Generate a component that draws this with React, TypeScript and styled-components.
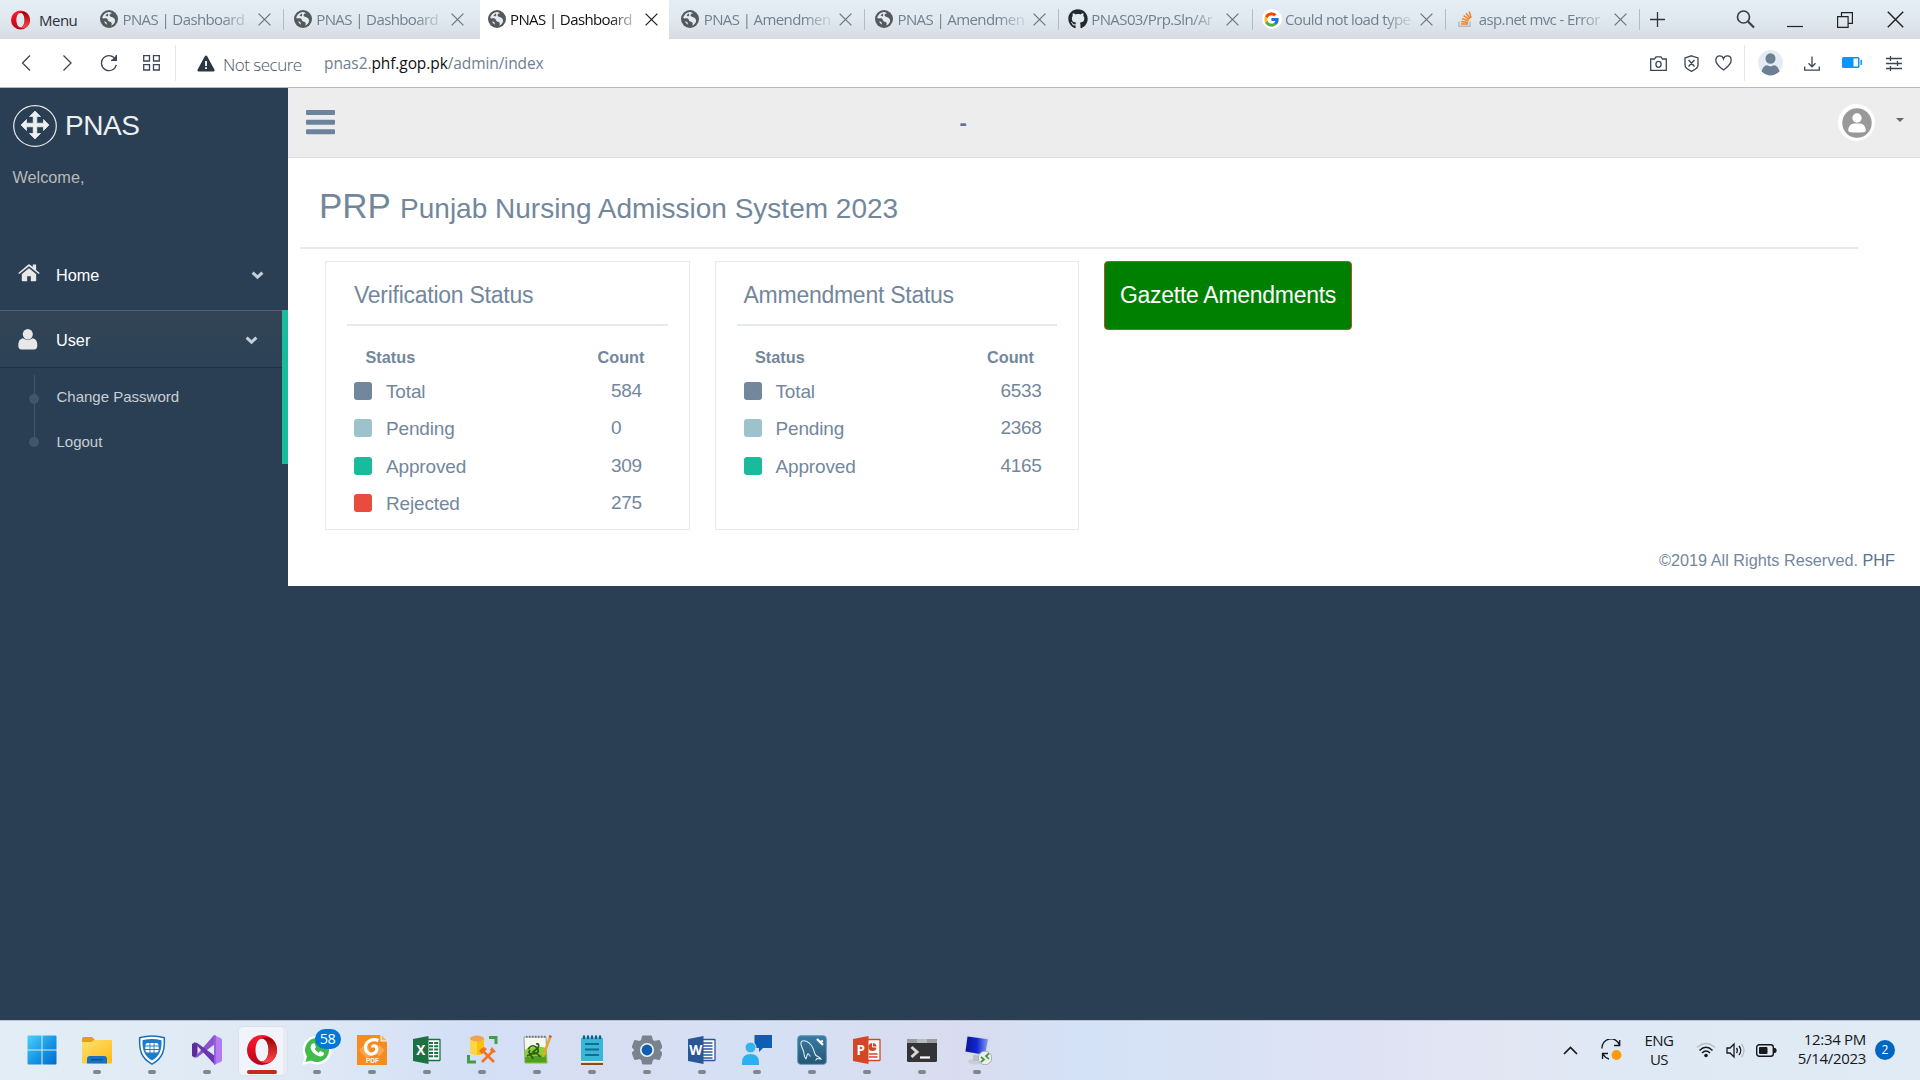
import React from 'react';
import styled, { createGlobalStyle, css } from 'styled-components';
import { FaGithub } from 'react-icons/fa';
import { FcGoogle } from 'react-icons/fc';

const Global = createGlobalStyle`
  * { box-sizing: border-box; }
  body { margin: 0; background: #2a3f54; overflow: hidden; }
  svg { display: block; flex: none; }
`;

const ui = css`font-family: "Open Sans", "Noto Sans", sans-serif; white-space: nowrap;`;

const Screen = styled.div`
  width: 1920px; height: 1080px; display: flex; flex-direction: column;
  background: #2a3f54; font-family: "Liberation Sans", Arial, sans-serif; color: #73879c;
`;

/* ---------- browser chrome ---------- */
const TabBar = styled.div`
  height: 39px; flex: none; display: flex; align-items: stretch;
  background: linear-gradient(#e4ecf4 0%, #e1e9f1 45%, #d7dce4 100%);
`;
const MenuButton = styled.div`
  ${ui} width: 90px; padding-left: 11px; display: flex; align-items: center; gap: 9px;
  font-size: 15px; color: #2b3038; letter-spacing: -0.5px; padding-top: 1px;
`;
const Tab = styled.div<{ $active?: boolean; $sep?: boolean }>`
  ${ui} width: 193.75px; padding: 0 12px 0 10px; display: flex; align-items: center; position: relative;
  font-size: 15px; color: ${p => (p.$active ? '#111' : '#71808e')};
  ${p => p.$active && css`background: #fff; margin-left: 2px; width: 189.75px; margin-right: 2px; padding: 0 10px 0 8px;`}
  ${p => p.$sep && css`&::after { content: ''; position: absolute; right: 0; top: 9px; width: 1px; height: 21px; background: #b0bcc9; }`}
`;
const Favicon = styled.div`width: 19px; height: 20px; display: flex; align-items: center; justify-content: center; margin: -1px 0 0 -0.500px;`;
const TabTitle = styled.div`
  width: 128px; margin: -2px 7px 0 4px; line-height: 24px; letter-spacing: -0.6px; font-stretch: 90%;
  mask-image: linear-gradient(90deg, #000 78%, rgba(0,0,0,.25) 96%);
`;
const WindowTools = styled.div`
  flex: 1; display: flex; align-items: center; padding: 0 16.500px 0 10px;
`;
const Spacer = styled.div<{ $w?: number }>`${p => (p.$w ? `width: ${p.$w}px; flex: none;` : 'flex: 1;')}`;

const AddressBar = styled.div`
  ${ui} height: 49px; flex: none; background: #fff; border-bottom: 1px solid #aebccb;
  display: flex; align-items: center; font-size: 16px; padding: 0 18px 0 18px;
`;
const Divider = styled.div`width: 1px; height: 36px; background: #e3e6ea;`;
const NotSecure = styled.div`font-size: 17px; color: #4c5866; font-weight: 300; letter-spacing: -0.5px; padding-top: 3px; width: 101px;`;
const Url = styled.div`font-size: 15.5px; color: #6f8090; letter-spacing: -0.09px; b { font-weight: 400; color: #111; }`;

/* ---------- site ---------- */
const Body = styled.div`flex: 1; display: flex; align-items: flex-start;`;
const Sidebar = styled.aside`width: 288px; flex: none; padding-top: 17px;`;
const Brand = styled.div`
  display: flex; align-items: center; gap: 8px; padding-left: 13px; height: 42px;
  font-size: 28px; color: #ecf0f1; line-height: 40px; letter-spacing: -0.4px;
  span { margin-top: -1px; }
`;
const Welcome = styled.div`padding: 20px 12.5px 0; font-size: 16.25px; line-height: 20px; color: #bab8b8; height: 93px;`;
const MenuItem = styled.div<{ $current?: boolean }>`
  height: 70px; display: flex; align-items: center; font-size: 16.25px; color: #fff; padding: 0 24px 0 18px;
  ${p => p.$current && css`
    height: 58px; padding-top: 2px; border-top: 1px solid #52616f; border-bottom: 1px solid #1f3040;
    background: linear-gradient(#334556, #2c4257);
  `}
`;
const MenuLabel = styled.span`flex: 1; margin-left: 16px;`;
const Current = styled.div`border-right: 6px solid #1abb9c; height: 154px;`;
const SubMenu = styled.div`padding: 7px 0 0 29px;`;
const SubItem = styled.div<{ $last?: boolean }>`
  height: 44px; display: flex; align-items: center; gap: 17.5px; position: relative; padding-bottom: ${p => (p.$last ? 0 : 1)}px;
  font-size: 15px; color: rgba(255,255,255,.75);
  &::before { content: ''; width: 10px; height: 10px; border-radius: 50%; background: #425668; margin-top: ${p => (p.$last ? 2 : 4)}px; z-index: 1; }
  &::after { content: ''; position: absolute; left: 5px; top: 0; width: 1px; height: ${p => (p.$last ? 22 : 44)}px; background: #425668; }
`;
const Main = styled.main`flex: 1; height: 498px; background: #fff; display: flex; flex-direction: column;`;
const TopNav = styled.div`
  height: 70px; flex: none; background: #ededed; border-bottom: 1px solid #d9dee4; display: flex; align-items: center;
  padding: 0 16px 0 18px; color: #5a738e; font-size: 22px; font-weight: bold;
`;
const Avatar = styled.div`width: 37px; height: 37px; border-radius: 50%; background: #fff; display: grid; place-items: center;`;
const Caret = styled.div`border: 4px solid transparent; border-top-color: #5a6b7c; border-bottom: 0; margin: -5px 0 0 21px;`;
const PageTitle = styled.h1`
  margin: 0 62px 0 12px; padding: 28px 0 0 19px; height: 91px; border-bottom: 2px solid #e6e9ed;
  font-weight: 400; font-size: 35px; line-height: 40px; flex: none;
  small { font-size: 28px; }
`;
const Cards = styled.div`display: flex; gap: 25px; padding: 12px 0 0 37px; align-items: flex-start;`;
const Card = styled.section`width: 364.5px; height: 269px; border: 1px solid #e6e9ed; padding: 0 21px;`;
const CardTitle = styled.h2`
  margin: 0; height: 64px; padding: 18px 0 0 7px; border-bottom: 2px solid #e6e9ed;
  font-size: 23px; line-height: 30px; font-weight: 400; letter-spacing: -0.26px;
`;
const HeadRow = styled.div`
  display: flex; font-size: 16.25px; font-weight: bold; padding: 21px 0 0 18.500px; height: 48px; line-height: 20px;
  span:first-child { width: 232px; }
`;
const Row = styled.div`display: flex; height: 37.4px; padding: 0 0 0 7px; font-size: 19px; line-height: 36px; align-items: flex-start;`;
const Swatch = styled.i<{ $c: string }>`width: 18px; height: 18px; border-radius: 3px; background: ${p => p.$c}; margin: 8px 14px 0 0;`;
const RowLabel = styled.span`width: 225px; letter-spacing: -0.15px;`;
const RowCount = styled.span`margin-top: -1px; letter-spacing: -0.28px;`;
const Gazette = styled.button`
  width: 248px; height: 69px; margin: 0; padding: 0; border: 1px solid #b5502f; border-radius: 4px; background: #008000;
  color: #fff; font: 23px "Liberation Sans", Arial, sans-serif; letter-spacing: -0.28px; white-space: nowrap;
`;
const Footer = styled.footer`margin-top: auto; padding: 0 25px 15px 0; text-align: right; font-size: 16.25px; line-height: 22px; b { font-weight: 400; color: #5a738e; }`;

/* ---------- taskbar ---------- */
const Taskbar = styled.div`
  height: 60px; flex: none; display: flex; align-items: stretch; border-top: 1px solid #b9c3cf; padding: 0 25px 0 14px;
  background: linear-gradient(90deg, #e2edf5 0, #dfe9f5 300px, #d3dff6 470px, #d8def2 600px, #d5e0f5 760px, #d9dcef 960px, #d4e2f7 1080px, #dfe3f3 1400px, #e3e7f4 1510px, #dfe9f5 1600px, #e0ebf5 1920px);
`;
const Slot = styled.div<{ $active?: boolean }>`
  width: 55px; position: relative; display: flex; flex-direction: column; align-items: center; padding-top: 13px;
  ${p => p.$active && css`&::before { content: ''; position: absolute; left: 4px; top: 5px; width: 48px; height: 48px; border-radius: 5px; background: #f1f5fb; border: 1px solid #dce2ec; box-shadow: inset -4px 0 0 #e6ebf4; }`}
  svg { position: relative; }
`;
const Running = styled.div<{ $active?: boolean }>`
  width: ${p => (p.$active ? 30 : 8)}px; height: 4px; border-radius: 2px; background: ${p => (p.$active ? '#c42b1c' : '#80868e')}; margin-top: 4px; position: relative;
`;
const Badge = styled.div`
  ${ui} position: absolute; left: 25.5px; top: 8px; width: 26px; height: 20px; border-radius: 10px; background: #0078d4; color: #fff;
  font-size: 14.5px; line-height: 19px; text-align: center; letter-spacing: -0.6px;
`;
const Tray = styled.div`${ui} display: flex; align-items: center; font-size: 15px; line-height: 20px; color: #15181c; padding-bottom: 1px; margin-left: auto;`;
const Lang = styled.div`width: 34px; text-align: center; letter-spacing: -0.5px; margin: 0 20px 0 20px; line-height: 19.500px;`;
const Clock = styled.div`width: 80px; text-align: right; margin: 0 9px 0 9px; letter-spacing: -0.3px; line-height: 19.500px; padding-bottom: 2px;`;
const Count = styled.div`width: 20px; height: 20px; border-radius: 50%; background: #0067c0; color: #fff; font-size: 12px; text-align: center;`;
const IconBox = styled.div`height: 32px; display: flex; align-items: center; justify-content: center; position: relative;`;

/* ---------- icons ---------- */
const Globe = () => (
  <svg width="18" height="18" viewBox="0 0 18 18">
    <circle cx="9" cy="9" r="9" fill="#56595c" />
    <path d="M7.800 2.200C10 1.700 11.500 2.600 12 3.700c-1.300-.3-2.200.3-2.400 1.300-.2 1.200.9 1.700 2.100 1.900 1.800.3 3.300 1.500 3.400 3.600 0 2.300-1.600 4.300-4 5.200.7-1.200.9-2.400.2-3.300-.7-.9-2-.8-2.900-1.500-.8-.7-.6-1.900-1.600-2.400-1.400-.6-3 .5-4.600-.4.300-2.700 2.500-5.300 5.600-5.900z" fill="#e3eaf1" />
    <path d="M7.600 3.600L5.500 5.600l1.800.9 1.100-1.400z" fill="#56595c" />
    <path d="M4.300 10.900l2.100 1.300.7 2.500-2.300-1.600z" fill="#e3eaf1" />
  </svg>
);
const Close = ({ size = 13, color = '#6e7780', w = 1.3 }: { size?: number; color?: string; w?: number }) => (
  <svg width={size} height={size} viewBox="0 0 13 13"><path d="M.6.6l11.800 11.800M12.400.6L.6 12.400" stroke={color} strokeWidth={w} /></svg>
);
const StackIcon = () => (
  <svg width="14" height="16" viewBox="0 0 14 16" fill="none">
    <path d="M1 10.500v4.700h11V10.500" stroke="#b6b9bd" strokeWidth="1.400" />
    <path d="M3 13h7M3.200 10.500l6.900.9M4 7.600l6.500 2.200M5.600 4.600l5.700 3.700M8 2.200l4.200 5.200M11.200.5l1.900 6.300" stroke="#f48024" strokeWidth="1.500" />
  </svg>
);
const GoogleIcon = styled.div`width: 20px; height: 20px; border-radius: 50%; background: #fff; display: grid; place-items: center; flex: none;`;
const OperaO = ({ w, h }: { w: number; h: number }) => (
  <svg width={w} height={h} viewBox="0 0 30 30">
    <defs>
      <linearGradient id="opA" x1="0" y1="0" x2="0" y2="1"><stop offset="0" stopColor="#ff1b2d" /><stop offset="1" stopColor="#b7041c" /></linearGradient>
      <linearGradient id="opB" x1="0" y1="0" x2="0" y2="1"><stop offset="0" stopColor="#9c0000" /><stop offset="1" stopColor="#ff4b4b" /></linearGradient>
    </defs>
    <path fill="url(#opA)" fillRule="evenodd" d="M15 0a15 15 0 1 0 0 30a15 15 0 1 0 0-30zm0 3.500c3.700 0 6.500 5 6.500 11.500s-2.800 11.500-6.500 11.500S8.500 21.500 8.500 15 11.300 3.500 15 3.500z" />
    <path fill="url(#opB)" d="M12 4.700C13 3.900 14 3.500 15 3.500c3.700 0 6.500 5 6.500 11.500s-2.800 11.500-6.500 11.500c-1 0-2-.4-3-1.200 4 4 9.500 2.500 13 .9a15 15 0 0 0 0-22.400C21.500 2.200 16 .7 12 4.700z" />
  </svg>
);
const ChevronDown = () => <svg width="13" height="9" viewBox="0 0 13 9"><path d="M1.600 1.600l4.900 4.600 4.900-4.600" fill="none" stroke="#c4cfda" strokeWidth="3" /></svg>;

const line = { fill: 'none', stroke: '#3c4654', strokeWidth: 1.3 } as const;

function WhatsApp() {
  return (
    <svg width="30" height="30" viewBox="0 0 30 30">
      <path fill="#fff" d="M15 .5a14.500 14.500 0 1 1-6.500 27.400L.3 30l2.300-7.800A14.500 14.500 0 0 1 15 .5z" />
      <path fill="#3dbb4b" d="M15 3a12 12 0 1 1-6 22.400L3.500 27 5 21.500A12 12 0 0 1 15 3z" />
      <path fill="#fff" d="M10.500 8.500l2-.3 1.500 4-1.400 1.600q1.300 2.700 4 3.900l1.600-1.700 3.800 1.800q.3 3-3 3.600c-5 0-10.500-5.400-10.500-9.500q.2-2.300 2-3.400z" />
    </svg>
  );
}

function Office({ color, letter, kind }: { color: string; letter: string; kind: 'x' | 'w' | 'p' }) {
  return (
    <svg width="30" height="30" viewBox="0 0 30 30">
      <rect x="14.500" y="4.500" width="13.500" height="21" rx=".5" fill="#fff" stroke={color} strokeWidth="1.300" />
      {kind === 'x' && <path stroke={color} strokeWidth="2" strokeDasharray="4 1.200" d="M17 8h10M17 11.300h10M17 14.600h10M17 17.900h10M17 21.200h10" />}
      {kind === 'w' && <path stroke={color} strokeWidth="1.400" d="M16 8h9.500M16 11h9.500M16 14h9.500M16 17h9.500M16 20h9.500M16 23h9.500" />}
      {kind === 'p' && <><circle cx="20.500" cy="12" r="4" fill={color} /><path d="M20.500 12V7.500M20.500 12h4.500" stroke="#fff" /><path stroke={color} strokeWidth="1.400" d="M17 19h8.500M17 22h8.500" /></>}
      <path fill={color} d="M1 4L16.500 1v28L1 26z" />
      <text x="8.700" y="20" fontFamily="Open Sans" fontWeight="bold" fontSize="13.500" fill="#fff" textAnchor="middle">{letter}</text>
    </svg>
  );
}

const taskIcons: React.ReactNode[] = [
  <svg width="30" height="30" viewBox="0 0 30 30">
    <defs><linearGradient id="win" gradientUnits="userSpaceOnUse" x1="0" y1="0" x2="30" y2="30"><stop offset="0" stopColor="#4fd0fc" /><stop offset=".5" stopColor="#1a9be6" /><stop offset="1" stopColor="#0069cc" /></linearGradient></defs>
    <path fill="url(#win)" d="M1.500 .5h13v14H.5v-13q0-1 1-1zM15.500 .5h13q1 0 1 1v13h-14zM.5 15.500h14v14h-13q-1 0-1-1zM15.500 15.500h14v13q0 1-1 1h-13z" />
  </svg>,
  <svg width="30" height="30" viewBox="0 0 30 30">
    <defs><linearGradient id="fold" x1="0" y1="0" x2="1" y2="1"><stop offset="0" stopColor="#ffe070" /><stop offset="1" stopColor="#fdbb16" /></linearGradient></defs>
    <path fill="#e2a113" d="M0 4q0-2 2-2h8l3 3v4H0z" /><path fill="url(#fold)" d="M0 7h9l3-2h17q1 0 1 1v21q0 1.500-1 1.500H1q-1 0-1-1z" />
    <path fill="#1573c4" d="M5 28.500V24q0-3 3-3h14q3 0 3 3v4.500z" /><path fill="#0b4f91" d="M9 24h12v1.300H9z" />
  </svg>,
  <svg width="28" height="30" viewBox="0 0 28 30">
    <path fill="#1c6fb8" d="M14 .3q6 .2 13 1.700c.8 13-1.500 22-13 28C2.500 24 .2 15 1 2Q8 .5 14 .3z" /><path fill="#fff" d="M14 1.800q5.500.2 11.500 1.500c.7 11.700-1.500 19.400-11.500 24.900C4 22.700 1.800 15 2.500 3.300 8.500 2 14 1.800 14 1.800z" />
    <path fill="#1a7ccc" d="M14 4q4.500.1 9.500 1.200c.3 9.300-1.500 15.600-9.500 20.300C6 20.800 4.200 14.500 4.500 5.200 9.500 4.100 14 4 14 4z" />
    <path fill="#fff" d="M9 8h2.500v2.500H7.300Q7.500 8.500 9 8zM12.400 8h3.200v2.500h-3.200zM16.500 8H19q1.500.5 1.700 2.500h-4.200zM7.300 11.500h4.200V14H7.300zM12.400 11.500h3.200V14h-3.200zM16.500 11.500h4.200V14h-4.200zM7.300 15h4.200v2.500H9Q7.500 17 7.300 15zM12.400 15h3.200v2.500h-3.200zM16.500 15h4.200q-.2 2-1.700 2.500h-2.500z" />
  </svg>,
  <svg width="30" height="30" viewBox="0 0 30 30">
    <path fill="#5b2d9a" d="M0 9l2.500-1.500L5.500 9v12l-3 1.500L0 21z" /><path fill="#8c52cf" d="M2.500 22.500L22 0l1 9L5 22.500z" /><path fill="#6a36b0" d="M2.500 7.500L5 7.800 23 21v9L2.500 8z" />
    <path fill="#b57bf0" d="M22 0l7 3.200q1 .5 1 1.500v20.600q0 1-1 1.500L22 30z" /><path fill="#9a5fe0" d="M22 0l2 .8v28L22 30z" />
  </svg>,
  <OperaO w={30} h={30} />,
  <WhatsApp />,
  <svg width="30" height="30" viewBox="0 0 30 30">
    <path fill="#f78b1f" d="M0 0h24l6 6v24H0z" /><path d="M24 0v6h6" fill="#fbb36a" stroke="#fff" strokeWidth="1" />
    <path fill="#faa550" d="M2 15l8-8 4 14-5 2zM28 15l-6-5-3 9 4 2z" />
    <path fill="none" stroke="#fff" strokeWidth="3.200" d="M21.500 5.500C15 3 8.500 6.500 8.500 12.500c0 4 3 7 6.500 6.500 4-.4 6-4.500 4-7.500-1.500-1.500-3.500-.5-3.500 1" />
    <text x="15.500" y="28" fontFamily="Liberation Sans" fontWeight="bold" fontSize="6.500" fill="#fff" textAnchor="middle">PDF</text>
  </svg>,
  <Office color="#1d7044" letter="X" kind="x" />,
  <svg width="34" height="30" viewBox="0 0 34 30">
    <path fill="#fcd54a" d="M5 3v14c0 2 3 3 7 3V3z" /><path fill="#fbc200" d="M12 3v17c4 0 7-1 7-3V3z" /><ellipse cx="12" cy="3.500" rx="7" ry="3" fill="#f0a450" />
    <path fill="none" stroke="#3f9f46" strokeWidth="3" d="M24 2.500h7V9M3.500 20v7H11" />
    <path fill="none" stroke="#ef7424" strokeWidth="2.600" d="M16 14l13 13M29 15L17 27" /><path fill="#ef7424" d="M14 16l5-4 3 2-5 5zM27 12l4 5-4 1-2-3z" />
  </svg>,
  <svg width="30" height="30" viewBox="0 0 30 30">
    <path fill="#f7f7f2" stroke="#888" strokeWidth=".8" d="M2 2h22l1 26H3z" /><path fill="#8ccf2e" d="M3 15q10-6 21.500-2l.3 15H3.200z" /><path fill="#4fa01a" d="M3 22l21-2 .5 7.500H3.200z" />
    <path fill="none" stroke="#2a5a16" strokeWidth="1.700" d="M6 14q5-6 9-1t-4 6q-6 0-3-4M14 9q4-1 2 4l-5 4q6 2 7 5M5 21q4-3 6 3" />
    <path d="M28.500 1L22 19l-1 3" stroke="#e8a628" strokeWidth="2.500" fill="none" /><path d="M28.700.5l-.7 2" stroke="#d04f3b" strokeWidth="2.500" /><path d="M4 1.700h20" stroke="#777" strokeDasharray="1.500 1.500" strokeWidth="2" />
  </svg>,
  <svg width="24" height="30" viewBox="0 0 24 30">
    <path fill="#8f4a12" d="M1 27h22v2.500q0 .7-1 .7H2q-1 0-1-.7z" /><path fill="#fff" d="M1 26h22v1.800H1z" /><path fill="#3bb5d8" d="M1 4q0-1.500 1.500-1.500h19q1.500 0 1.500 1.500v22H1z" />
    <path stroke="#0b6f93" strokeWidth="1.800" d="M5 9h14M5 14.500h14M5 20h14" /><path stroke="#0a6181" strokeWidth="2.300" strokeLinecap="round" d="M4 1.500v1.700M8 1.500v1.700M12 1.500v1.700M16 1.500v1.700M20 1.500v1.700" />
  </svg>,
  <svg width="30" height="30" viewBox="0 0 30 30">
    <path fill="#79838d" stroke="#79838d" strokeWidth="2" strokeLinejoin="round" d="M11 1.500h8l1 4 2.500 1.500L27 6l2.500 6-3 3 3 3.500L27 24l-4.500-1-2.500 1.500-1 4h-8l-1-4L7.500 23 3 24 .8 18l3-3-3-3L3 6l4.500 1L10 5.500z" />
    <circle cx="15" cy="15" r="7" fill="#f1f4f8" /><circle cx="15" cy="15" r="5.400" fill="#0f5fae" />
  </svg>,
  <Office color="#2b5797" letter="W" kind="w" />,
  <svg width="30" height="30" viewBox="0 0 30 30">
    <path fill="#0d5eb5" d="M12.500 0H30v13H21l-4 4v-4h-4.500z" /><circle cx="8.500" cy="12.500" r="5.500" fill="#35b3ec" stroke="#dfe9f7" /><path fill="#2cb0f0" d="M0 30v-2.500Q0 19 8.500 19t8.500 8.500V30z" />
  </svg>,
  <svg width="30" height="30" viewBox="0 0 30 30">
    <defs><linearGradient id="my" x1="0" y1="0" x2="0" y2="1"><stop offset="0" stopColor="#3a7ba3" /><stop offset="1" stopColor="#235674" /></linearGradient></defs>
    <rect x=".7" y=".7" width="28.600" height="28.600" rx="3" fill="url(#my)" stroke="#5f98ba" />
    <path fill="none" stroke="#d9ecf7" strokeWidth="1.100" d="M9 24c-2.500-2-1.500-5-2.500-8S2.500 9 4.500 6.500c2.500-2 7 0 10 4 2.500 3.500 2.500 7 4 9.500 1.500 1.500 4 2 5.500 4l-4-.5-1.500 2M9 24c.5-2 .8-4 2-5.500l2.500 3" /><path d="M20 4l3 3 3-1M23 7l3 3" stroke="#fff" strokeWidth="2.200" fill="none" />
  </svg>,
  <Office color="#d24726" letter="P" kind="p" />,
  <svg width="30" height="30" viewBox="0 0 30 30">
    <rect y="4" width="30" height="23" rx="1.500" fill="#343434" /><path fill="#9a9da0" d="M0 8V5.500Q0 4 1.500 4h27Q30 4 30 5.500V8z" /><path fill="#b9bcbf" d="M10 4h10v4H10z" />
    <path d="M4.500 12l5.500 5-5.500 5" fill="none" stroke="#d7d7d7" strokeWidth="3" /><path d="M13 22.500h10" stroke="#fff" strokeWidth="2.200" />
  </svg>,
  <svg width="30" height="30" viewBox="0 0 30 30">
    <defs><linearGradient id="scr" x1="0" y1="0" x2="1" y2="0"><stop offset="0" stopColor="#0a149c" /><stop offset=".5" stopColor="#1226d0" /><stop offset="1" stopColor="#7f9cf0" /></linearGradient></defs>
    <ellipse cx="13" cy="26.500" rx="7" ry="3" fill="#c9ced4" /><path fill="#b8bfc6" d="M11 20h6v6h-6z" /><path fill="#d3dae4" d="M4 0l24 3-3.500 19L1.500 18z" /><path fill="url(#scr)" d="M5.500 1.500L26 4.200 23 20 3.500 16.500z" />
    <circle cx="23" cy="23" r="6.800" fill="#eceeec" stroke="#a9aeae" /><path d="M19 22l3 2.500-3 2.500M27 18.500L24 21l3 3" fill="none" stroke="#39973b" strokeWidth="1.700" />
  </svg>,
];

const tabs = [
  { icon: <Globe />, title: 'PNAS | Dashboard', sep: true },
  { icon: <Globe />, title: 'PNAS | Dashboard' },
  { icon: <Globe />, title: 'PNAS | Dashboard', active: true },
  { icon: <Globe />, title: 'PNAS | Amendmen', sep: true },
  { icon: <Globe />, title: 'PNAS | Amendmen', sep: true },
  { icon: <FaGithub size={20} color="#24292e" />, title: 'PNAS03/Prp.Sln/Ar', sep: true },
  { icon: <GoogleIcon><FcGoogle size={17} /></GoogleIcon>, title: 'Could not load type', sep: true },
  { icon: <StackIcon />, title: 'asp.net mvc - Error', sep: true },
];

type Stat = [string, string, string];
const verification: Stat[] = [['#73879c', 'Total', '584'], ['#9cc2cb', 'Pending', '0'], ['#1abb9c', 'Approved', '309'], ['#e74c3c', 'Rejected', '275']];
const amendment: Stat[] = [['#73879c', 'Total', '6533'], ['#9cc2cb', 'Pending', '2368'], ['#1abb9c', 'Approved', '4165']];

const StatusCard = ({ title, rows }: { title: string; rows: Stat[] }) => (
  <Card>
    <CardTitle>{title}</CardTitle>
    <HeadRow><span>Status</span><span>Count</span></HeadRow>
    {rows.map(([c, label, n]) => (
      <Row key={label}><Swatch $c={c} /><RowLabel>{label}</RowLabel><RowCount>{n}</RowCount></Row>
    ))}
  </Card>
);

export default function App() {
  return (
    <Screen>
      <Global />
      <TabBar>
        <MenuButton><OperaO w={19} h={20} />Menu</MenuButton>
        {tabs.map((t, i) => (
          <Tab key={i} $active={t.active} $sep={t.sep}>
            <Favicon>{t.icon}</Favicon>
            <TabTitle>{t.title}</TabTitle>
            <Close color={t.active ? '#222' : undefined} />
          </Tab>
        ))}
        <WindowTools>
          <svg width="15" height="15" viewBox="0 0 15 15"><path d="M7.500 0v15M0 7.500h15" stroke="#2e353d" strokeWidth="1.300" /></svg>
          <Spacer />
          <svg width="19" height="19" viewBox="0 0 19 19"><circle cx="7.500" cy="7" r="6" fill="none" stroke="#3a4048" strokeWidth="1.700" /><path d="M12 11.500l6 6" stroke="#3a4048" strokeWidth="2.200" /></svg>
          <Spacer $w={32} />
          <svg width="16" height="16" viewBox="0 0 16 16"><path d="M0 14.500h16" stroke="#222" strokeWidth="1.200" /></svg>
          <Spacer $w={34} />
          <svg width="16" height="16" viewBox="0 0 16 16" fill="none" stroke="#222" strokeWidth="1.200"><path d="M.6 4.600h10.500v10.800H.6zM4.500 4.600V.6h10.900v10.800h-4.300" /></svg>
          <Spacer $w={34} />
          <Close size={17} color="#222" w={1.1} />
        </WindowTools>
      </TabBar>

      <AddressBar>
        <svg width="16" height="18" viewBox="0 0 16 18"><path d="M12 1.500L4.500 9l7.500 7.500" {...line} /></svg>
        <Spacer $w={26} />
        <svg width="16" height="18" viewBox="0 0 16 18"><path d="M3.500 1.500L11 9l-7.500 7.500" {...line} /></svg>
        <Spacer $w={24} />
        <svg width="18" height="18" viewBox="0 0 18 18"><path d="M15.800 6A7.500 7.500 0 1 0 16.300 10.800M16.300 1v5.300H11" {...line} /><path d="M16.800 1v5.800H11z" fill="#3c4654" /></svg>
        <Spacer $w={24.5} />
        <svg width="17" height="16" viewBox="0 0 17 16"><path d="M.7.700h5.800v5.300H.7zM10.500.700h5.800v5.300h-5.800zM.7 9.700h5.800V15H.7zM10.500 9.700h5.800V15h-5.800z" {...line} /></svg>
        <Spacer $w={15.5} />
        <Divider />
        <Spacer $w={21} />
        <svg width="18" height="17" viewBox="0 0 18 17"><path fill="#2b3745" d="M9 .5q.8 0 1.200.8l7.300 13.500q.5 1.700-1 1.700h-15q-1.500 0-1-1.700L7.800 1.300Q8.200.5 9 .5z" /><path stroke="#fff" strokeWidth="1.800" d="M9 6v5M9 12.300v1.700" /></svg>
        <Spacer $w={8} />
        <NotSecure>Not secure</NotSecure>
        <Url>pnas2.<b>phf.gop.pk</b>/admin/index</Url>
        <Spacer />
        <svg width="17" height="15" viewBox="0 0 17 15"><path d="M.7 3h3.800l1.500-2.200h5L12.500 3h3.800v11.300H.7z" {...line} /><ellipse cx="8.500" cy="8.300" rx="2.600" ry="3" {...line} /></svg>
        <Spacer $w={17} />
        <svg width="15" height="17" viewBox="0 0 15 17"><path d="M7.500.8L14 3v7q0 3.500-6.500 6.300Q1 13.500 1 10V3zM4.500 5l6 6.500M10.500 5l-6 6.500" {...line} /></svg>
        <Spacer $w={16} />
        <svg width="17" height="16" viewBox="0 0 17 16"><path d="M8.500 15C5 12.500.8 9.500.8 5.300.8 2.500 2.500.8 4.600.8 6.600.8 8 2 8.500 3.700 9 2 10.400.8 12.400.8c2.100 0 3.800 1.700 3.800 4.500C16.200 9.500 12 12.500 8.500 15z" {...line} /></svg>
        <Spacer $w={12} />
        <Divider />
        <Spacer $w={13} />
        <svg width="25" height="26" viewBox="0 0 25 26"><circle cx="12.500" cy="12.500" r="12.500" fill="#e4ebf3" /><ellipse cx="12.500" cy="8.500" rx="5" ry="5.300" fill="#6c7f93" /><path d="M3.500 21.500Q5 15.800 9 15.300l3.500 1.300 3.500-1.300q4 .5 5.500 6.200-9 8-18 0z" fill="#6c7f93" /></svg>
        <Spacer $w={20.5} />
        <svg width="16" height="15" viewBox="0 0 16 15"><path d="M8 .5v10M4.500 7.300L8 10.800l3.500-3.500M.7 10.500v3.700h14.600v-3.700" {...line} /></svg>
        <Spacer $w={22.5} />
        <svg width="20" height="13" viewBox="0 0 20 13"><rect width="17.500" height="11" rx="1.500" fill="#0a95ff" /><path fill="#fff" d="M11.500 1.500h4.500v8h-4.500z" /><path fill="#0a95ff" d="M18.500 3H20v5h-1.500z" /></svg>
        <Spacer $w={24} />
        <svg width="16" height="15" viewBox="0 0 16 15"><path d="M0 2.500h16M0 7.500h16M0 12.500h16M4.500 0v5M11.500 5v5M4.500 10v5" {...line} /></svg>
      </AddressBar>

      <Body>
        <Sidebar>
          <Brand>
            <svg width="44" height="42" viewBox="0 0 44 42"><ellipse cx="22" cy="21" rx="21.300" ry="20.300" fill="none" stroke="#eaeaea" strokeWidth="1.200" />
              <path fill="#ecf0f1" d="M22 6l5.500 5.500h-3.700v6.700h6.700v-3.700L36 20l-5.500 5.500v-3.700h-6.700v6.700h3.700L22 34l-5.500-5.500h3.700v-6.700h-6.700v3.700L8 20l5.500-5.500v3.700h6.700v-6.700h-3.700z" strokeLinejoin="round" stroke="#ecf0f1" strokeWidth=".7" /></svg>
            <span>PNAS</span>
          </Brand>
          <Welcome>Welcome,</Welcome>
          <MenuItem>
            <svg width="22" height="22" viewBox="0 0 22 22"><path fill="#e8e8e8" d="M11 3.800l7.200 6v6.700q0 .8-.8.800h-4.600v-5H9.200v5H4.600q-.8 0-.8-.8V9.800z" /><path fill="#e8e8e8" d="M11 .3q.6 0 1 .4l2.800 2.400V.600h3.300v5.300l3.600 3-1 1.200L11 2.300 1.300 10.100l-1-1.200L10 .7q.4-.4 1-.4z" /><path d="M3.500 9.900L11 3.700l7.500 6.200" fill="none" stroke="#2a3f54" strokeWidth=".8" /></svg>
            <MenuLabel>Home</MenuLabel><ChevronDown />
          </MenuItem>
          <Current>
            <MenuItem $current>
              <svg width="22" height="23" viewBox="0 0 22 23"><ellipse cx="9.800" cy="5.300" rx="5" ry="5.200" fill="#e8e8e8" /><path fill="#e8e8e8" d="M.3 16.500q0-6.700 4.700-7.300 4.800 3.600 9.600 0 4.700.6 4.700 7.300 0 4-3.300 4H3.600q-3.300 0-3.300-4z" /></svg>
              <MenuLabel>User</MenuLabel><ChevronDown />
            </MenuItem>
            <SubMenu><SubItem>Change Password</SubItem><SubItem $last>Logout</SubItem></SubMenu>
          </Current>
        </Sidebar>
        <Main>
          <TopNav>
            <svg width="29" height="25" viewBox="0 0 29 25" fill="#6b839c"><rect width="29" height="5" rx="1" /><rect y="9.700" width="29" height="5" rx="1" /><rect y="19.300" width="29" height="5" rx="1" /></svg>
            <Spacer $w={624.5} />
            <span>-</span>
            <Spacer />
            <Avatar><svg width="30" height="30" viewBox="0 0 30 30"><circle cx="15" cy="15" r="14.700" fill="#999" /><circle cx="15" cy="10" r="4.700" fill="#fff" /><path fill="#fff" d="M6.300 23q0-7.500 6-7.500h5.400q6 0 6 7.500 0 1.500-8.700 1.500T6.300 23z" /></svg></Avatar>
            <Caret />
          </TopNav>
          <PageTitle>PRP <small>Punjab Nursing Admission System 2023</small></PageTitle>
          <Cards>
            <StatusCard title="Verification Status" rows={verification} />
            <StatusCard title="Ammendment Status" rows={amendment} />
            <Gazette>Gazette Amendments</Gazette>
          </Cards>
          <Footer>©2019 All Rights Reserved. <b>PHF</b></Footer>
        </Main>
      </Body>

      <Taskbar>
        {taskIcons.map((icon, i) => (
          <Slot key={i} $active={i === 4}>
            <IconBox>{icon}</IconBox>
            {i > 0 && <Running $active={i === 4} />}
            {i === 5 && <Badge>58</Badge>}
          </Slot>
        ))}
        <Tray>
          <svg width="15" height="9" viewBox="0 0 15 9"><path d="M1 8l6.500-6.500L14 8" fill="none" stroke="#15181c" strokeWidth="1.700" /></svg>
          <Spacer $w={23} />
          <svg width="21" height="22" viewBox="0 0 21 22"><path d="M1 9.500A9 9 0 0 1 18.500 6M18.700 1v5.500H13M8 20q-4-1-6-5M1.500 20v-5.500H7" fill="none" stroke="#15181c" strokeWidth="1.300" /><circle cx="15.500" cy="16" r="5" fill="#ff9a0a" /></svg>
          <Lang>ENG<br />US</Lang>
          <svg width="20" height="16" viewBox="0 0 20 16" fill="none" strokeWidth="1.500"><path d="M1 5.500Q10-2.500 19 5.500" stroke="#b6bdc6" /><path d="M3.500 8.500Q10 2 16.500 8.500M6 11Q10 7 14 11" stroke="#15181c" /><circle cx="10" cy="13.500" r="1.800" fill="#15181c" /></svg>
          <Spacer $w={10} />
          <svg width="20" height="17" viewBox="0 0 20 17" fill="none" strokeWidth="1.300"><path d="M1 6h3l4-4v13l-4-4H1z" stroke="#15181c" /><path d="M10.500 6q1.800 2.500 0 5M13 4q3.500 4.500 0 9" stroke="#15181c" /><path d="M15.500 2q5 6.500 0 13" stroke="#b6bdc6" /></svg>
          <Spacer $w={10} />
          <svg width="21" height="13" viewBox="0 0 21 13"><rect x=".7" y=".7" width="16.600" height="11.600" rx="2.500" fill="none" stroke="#15181c" strokeWidth="1.400" /><rect x="3" y="3" width="8.500" height="7" rx="1" fill="#15181c" /><path d="M18 4.300l2 .7v3l-2 .7z" fill="#15181c" stroke="#15181c" /></svg>
          <Clock>12:34 PM<br />5/14/2023</Clock>
          <Count>2</Count>
        </Tray>
      </Taskbar>
    </Screen>
  );
}
